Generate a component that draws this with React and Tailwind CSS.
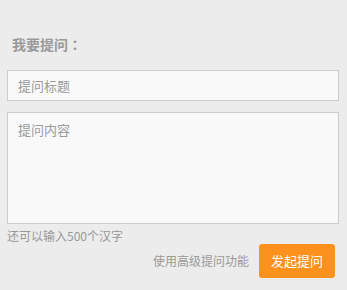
import React, { useState } from 'react';

export default function App() {
  const [title, setTitle] = useState('');
  const [content, setContent] = useState('');
  const left = 500 - content.length;

  return (
    <div
      className="min-h-[290px] w-full bg-[#ececec] px-[7px] pt-[34px]"
      style={{ fontFamily: '"Noto Sans CJK SC", "Noto Sans", sans-serif' }}
    >
      <div className="w-[332px]">
        {/* heading */}
        <h3 className="pl-[5px] text-[14px] font-bold leading-[20px] text-[#999]">
          我要提问<span style={{ fontFamily: '"Noto Sans CJK TC", sans-serif' }}>：</span>
        </h3>

        {/* title */}
        <input
          type="text"
          value={title}
          onChange={(e) => setTitle(e.target.value)}
          placeholder="提问标题"
          className="mt-[16px] block h-[31px] w-full border border-[#ccc] bg-[#f9f9f9] px-[10px] text-[13px] text-[#666] outline-none placeholder:text-[#999]"
        />

        {/* content */}
        <textarea
          value={content}
          onChange={(e) => setContent(e.target.value)}
          placeholder="提问内容"
          className="mt-[11px] block h-[112px] w-full resize-none border border-[#ccc] bg-[#f9f9f9] px-[10px] py-[8px] text-[13px] leading-[18px] text-[#666] outline-none placeholder:text-[#999]"
        />
        <div className="mt-[3px] text-[12px] leading-[17px] text-[#999]">还可以输入{left}个汉字</div>

        {/* actions */}
        <div className="flex items-center justify-end pr-[4px]">
          <a href="#" className="mr-[10px] text-[12px] leading-[16px] text-[#999]">使用高级提问功能</a>
          <button
            type="button"
            className="h-[34px] w-[76px] rounded-[3px] bg-[#fd911d] text-[13px] text-white"
          >
            发起提问
          </button>
        </div>
      </div>
    </div>
  );
}
